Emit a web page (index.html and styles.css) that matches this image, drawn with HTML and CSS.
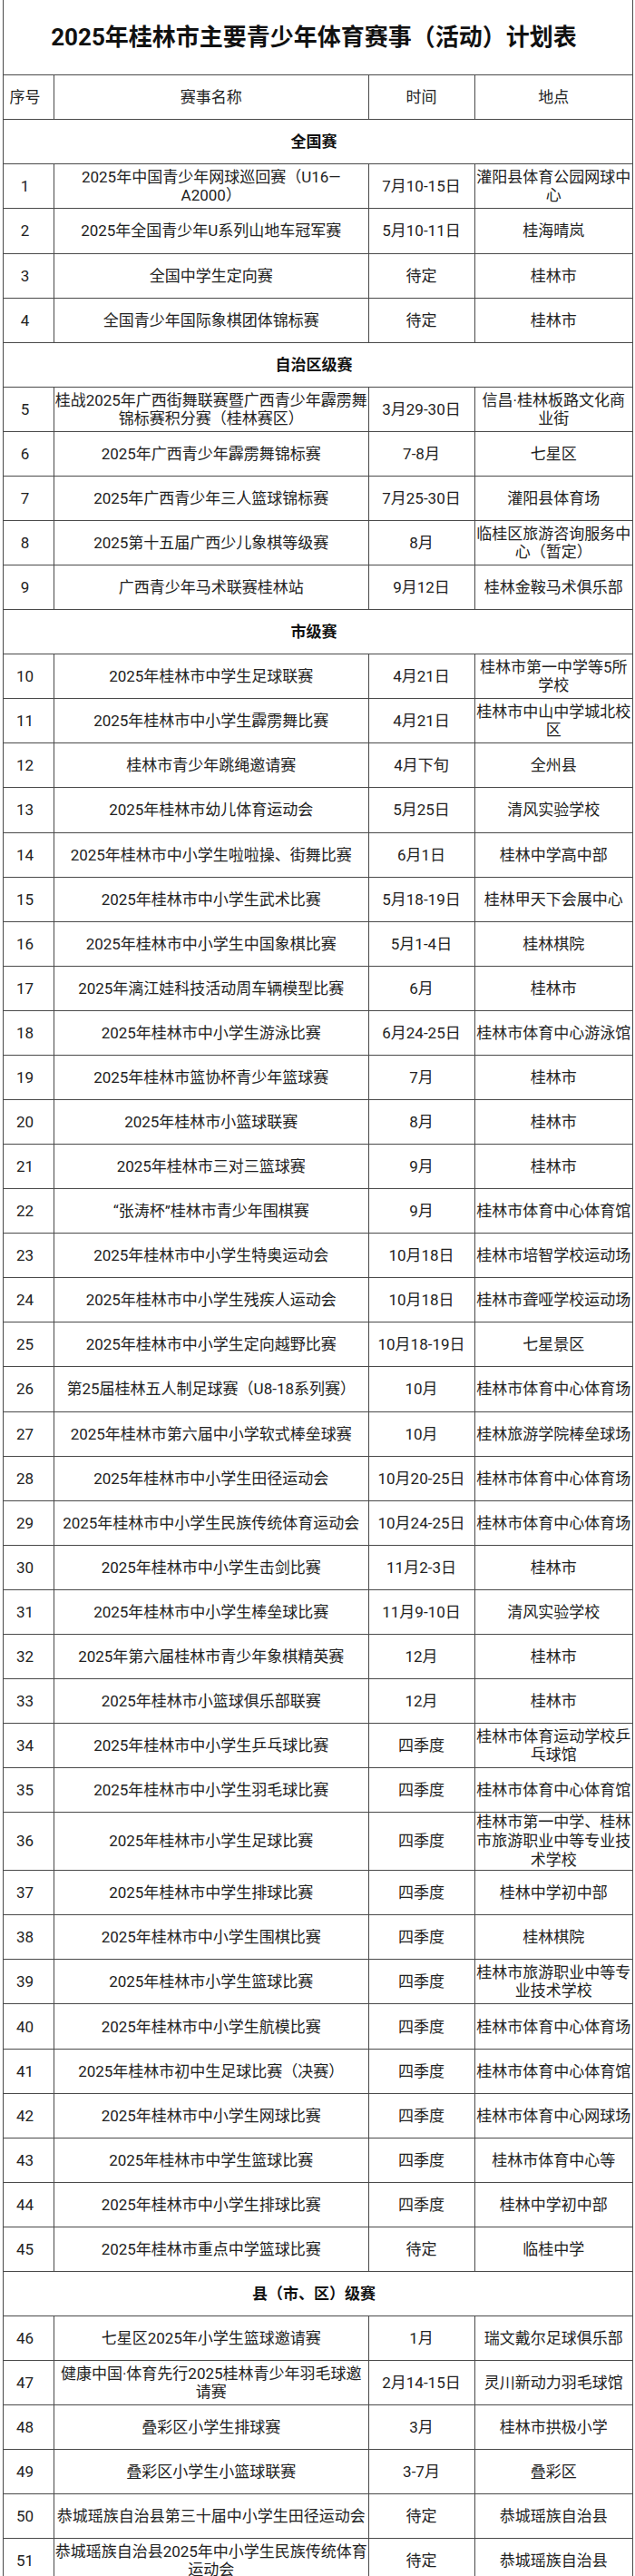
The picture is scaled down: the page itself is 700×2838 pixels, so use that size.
FILE: index.html
```html
<!DOCTYPE html>
<html lang="zh-CN">
<head>
<meta charset="utf-8">
<title>2025年桂林市主要青少年体育赛事（活动）计划表</title>
<link rel="stylesheet" href="styles.css">
</head>
<body>
<div class="page">
<table class="plan">
<colgroup>
<col class="c-num"><col class="c-name"><col class="c-time"><col class="c-place">
</colgroup>
<tbody>
<tr class="title"><td colspan="4">2025年桂林市主要青少年体育赛事（活动）计划表</td></tr>
<tr class="head"><td class="num">序号</td><td>赛事名称</td><td>时间</td><td>地点</td></tr>

<tr class="section"><td colspan="4">全国赛</td></tr>
<tr><td class="num">1</td><td>2025年中国青少年网球巡回赛（U16—<br>A2000）</td><td>7月10-15日</td><td>灌阳县体育公园网球中<br>心</td></tr>
<tr><td class="num">2</td><td>2025年全国青少年U系列山地车冠军赛</td><td>5月10-11日</td><td>桂海晴岚</td></tr>
<tr><td class="num">3</td><td>全国中学生定向赛</td><td>待定</td><td>桂林市</td></tr>
<tr><td class="num">4</td><td>全国青少年国际象棋团体锦标赛</td><td>待定</td><td>桂林市</td></tr>

<tr class="section"><td colspan="4">自治区级赛</td></tr>
<tr><td class="num">5</td><td>桂战2025年广西街舞联赛暨广西青少年霹雳舞<br>锦标赛积分赛（桂林赛区）</td><td>3月29-30日</td><td>信昌·桂林板路文化商<br>业街</td></tr>
<tr><td class="num">6</td><td>2025年广西青少年霹雳舞锦标赛</td><td>7-8月</td><td>七星区</td></tr>
<tr><td class="num">7</td><td>2025年广西青少年三人篮球锦标赛</td><td>7月25-30日</td><td>灌阳县体育场</td></tr>
<tr><td class="num">8</td><td>2025第十五届广西少儿象棋等级赛</td><td>8月</td><td>临桂区旅游咨询服务中<br>心（暂定）</td></tr>
<tr><td class="num">9</td><td>广西青少年马术联赛桂林站</td><td>9月12日</td><td>桂林金鞍马术俱乐部</td></tr>

<tr class="section"><td colspan="4">市级赛</td></tr>
<tr><td class="num">10</td><td>2025年桂林市中学生足球联赛</td><td>4月21日</td><td>桂林市第一中学等5所<br>学校</td></tr>
<tr><td class="num">11</td><td>2025年桂林市中小学生霹雳舞比赛</td><td>4月21日</td><td>桂林市中山中学城北校<br>区</td></tr>
<tr><td class="num">12</td><td>桂林市青少年跳绳邀请赛</td><td>4月下旬</td><td>全州县</td></tr>
<tr><td class="num">13</td><td>2025年桂林市幼儿体育运动会</td><td>5月25日</td><td>清风实验学校</td></tr>
<tr><td class="num">14</td><td>2025年桂林市中小学生啦啦操、街舞比赛</td><td>6月1日</td><td>桂林中学高中部</td></tr>
<tr><td class="num">15</td><td>2025年桂林市中小学生武术比赛</td><td>5月18-19日</td><td>桂林甲天下会展中心</td></tr>
<tr><td class="num">16</td><td>2025年桂林市中小学生中国象棋比赛</td><td>5月1-4日</td><td>桂林棋院</td></tr>
<tr><td class="num">17</td><td>2025年漓江娃科技活动周车辆模型比赛</td><td>6月</td><td>桂林市</td></tr>
<tr><td class="num">18</td><td>2025年桂林市中小学生游泳比赛</td><td>6月24-25日</td><td>桂林市体育中心游泳馆</td></tr>
<tr><td class="num">19</td><td>2025年桂林市篮协杯青少年篮球赛</td><td>7月</td><td>桂林市</td></tr>
<tr><td class="num">20</td><td>2025年桂林市小篮球联赛</td><td>8月</td><td>桂林市</td></tr>
<tr><td class="num">21</td><td>2025年桂林市三对三篮球赛</td><td>9月</td><td>桂林市</td></tr>
<tr><td class="num">22</td><td>“张涛杯”桂林市青少年围棋赛</td><td>9月</td><td>桂林市体育中心体育馆</td></tr>
<tr><td class="num">23</td><td>2025年桂林市中小学生特奥运动会</td><td>10月18日</td><td>桂林市培智学校运动场</td></tr>
<tr><td class="num">24</td><td>2025年桂林市中小学生残疾人运动会</td><td>10月18日</td><td>桂林市聋哑学校运动场</td></tr>
<tr><td class="num">25</td><td>2025年桂林市中小学生定向越野比赛</td><td>10月18-19日</td><td>七星景区</td></tr>
<tr><td class="num">26</td><td>第25届桂林五人制足球赛（U8-18系列赛）</td><td>10月</td><td>桂林市体育中心体育场</td></tr>
<tr><td class="num">27</td><td>2025年桂林市第六届中小学软式棒垒球赛</td><td>10月</td><td>桂林旅游学院棒垒球场</td></tr>
<tr><td class="num">28</td><td>2025年桂林市中小学生田径运动会</td><td>10月20-25日</td><td>桂林市体育中心体育场</td></tr>
<tr><td class="num">29</td><td>2025年桂林市中小学生民族传统体育运动会</td><td>10月24-25日</td><td>桂林市体育中心体育场</td></tr>
<tr><td class="num">30</td><td>2025年桂林市中小学生击剑比赛</td><td>11月2-3日</td><td>桂林市</td></tr>
<tr><td class="num">31</td><td>2025年桂林市中小学生棒垒球比赛</td><td>11月9-10日</td><td>清风实验学校</td></tr>
<tr><td class="num">32</td><td>2025年第六届桂林市青少年象棋精英赛</td><td>12月</td><td>桂林市</td></tr>
<tr><td class="num">33</td><td>2025年桂林市小篮球俱乐部联赛</td><td>12月</td><td>桂林市</td></tr>
<tr><td class="num">34</td><td>2025年桂林市中小学生乒乓球比赛</td><td>四季度</td><td>桂林市体育运动学校乒<br>乓球馆</td></tr>
<tr><td class="num">35</td><td>2025年桂林市中小学生羽毛球比赛</td><td>四季度</td><td>桂林市体育中心体育馆</td></tr>
<tr class="tall"><td class="num">36</td><td>2025年桂林市小学生足球比赛</td><td>四季度</td><td>桂林市第一中学、桂林<br>市旅游职业中等专业技<br>术学校</td></tr>
<tr><td class="num">37</td><td>2025年桂林市中学生排球比赛</td><td>四季度</td><td>桂林中学初中部</td></tr>
<tr><td class="num">38</td><td>2025年桂林市中小学生围棋比赛</td><td>四季度</td><td>桂林棋院</td></tr>
<tr><td class="num">39</td><td>2025年桂林市小学生篮球比赛</td><td>四季度</td><td>桂林市旅游职业中等专<br>业技术学校</td></tr>
<tr><td class="num">40</td><td>2025年桂林市中小学生航模比赛</td><td>四季度</td><td>桂林市体育中心体育场</td></tr>
<tr><td class="num">41</td><td>2025年桂林市初中生足球比赛（决赛）</td><td>四季度</td><td>桂林市体育中心体育馆</td></tr>
<tr><td class="num">42</td><td>2025年桂林市中小学生网球比赛</td><td>四季度</td><td>桂林市体育中心网球场</td></tr>
<tr><td class="num">43</td><td>2025年桂林市中学生篮球比赛</td><td>四季度</td><td>桂林市体育中心等</td></tr>
<tr><td class="num">44</td><td>2025年桂林市中小学生排球比赛</td><td>四季度</td><td>桂林中学初中部</td></tr>
<tr><td class="num">45</td><td>2025年桂林市重点中学篮球比赛</td><td>待定</td><td>临桂中学</td></tr>

<tr class="section"><td colspan="4">县（市、区）级赛</td></tr>
<tr><td class="num">46</td><td>七星区2025年小学生篮球邀请赛</td><td>1月</td><td>瑞文戴尔足球俱乐部</td></tr>
<tr><td class="num">47</td><td>健康中国·体育先行2025桂林青少年羽毛球邀<br>请赛</td><td>2月14-15日</td><td>灵川新动力羽毛球馆</td></tr>
<tr><td class="num">48</td><td>叠彩区小学生排球赛</td><td>3月</td><td>桂林市拱极小学</td></tr>
<tr><td class="num">49</td><td>叠彩区小学生小篮球联赛</td><td>3-7月</td><td>叠彩区</td></tr>
<tr><td class="num">50</td><td>恭城瑶族自治县第三十届中小学生田径运动会</td><td>待定</td><td>恭城瑶族自治县</td></tr>
<tr><td class="num">51</td><td>恭城瑶族自治县2025年中小学生民族传统体育<br>运动会</td><td>待定</td><td>恭城瑶族自治县</td></tr>
</tbody>
</table>
</div>
</body>
</html>
```

FILE: styles.css
```css
html, body {
  margin: 0;
  padding: 0;
  background: #ffffff;
}

body {
  font-family: Roboto, "Noto Sans CJK SC", sans-serif;
  color: #222222;
}

.page {
  padding-left: 3px;
}

.plan {
  border-collapse: collapse;
  table-layout: fixed;
  width: 695px;
}

.c-num { width: 56px; }
.c-name { width: 346.5px; }
.c-time { width: 117px; }
.c-place { width: 174.5px; }

.plan td {
  border: 1px solid #4a4a4a;
  padding: 0;
  height: 48.08px;
  text-align: center;
  vertical-align: middle;
  font-size: 17px;
  line-height: 20px;
  font-weight: 400;
  white-space: nowrap;
}

.plan .num {
  padding-right: 8px;
}

.title td {
  border-top: none;
  height: 82.2px;
  font-size: 26px;
  line-height: 32px;
  font-weight: 700;
  color: #111111;
  padding-right: 9px;
}

.section td {
  font-weight: 700;
  color: #111111;
  padding-right: 9px;
}

.tall td {
  height: 62.3px;
  line-height: 21px;
}
```
